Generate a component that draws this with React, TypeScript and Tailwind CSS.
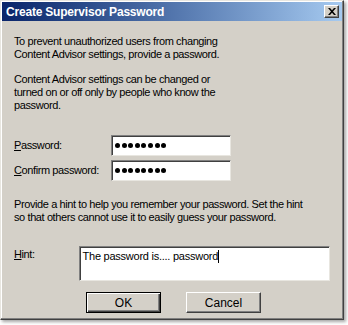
export default function App() {
  const dots = [0, 1, 2, 3, 4, 5, 6, 7];

  return (
    <div className="w-[348px] h-[325px] bg-white overflow-hidden font-['Liberation_Sans',Arial,sans-serif] text-black">
      {/* Dialog window */}
      <div className="w-[344px] h-[320px] bg-[#d4d0c8] border border-t-[#e8e6e0] border-l-[#e8e6e0] border-r-[#404040] border-b-[#404040] shadow-[inset_-1px_-1px_0_#808080,inset_1px_1px_0_#ffffff,2px_2px_3px_rgba(0,0,0,0.35)] p-[1px] flex flex-col">
        {/* Title bar */}
        <div className="h-[19px] bg-gradient-to-r from-[#0a246a] to-[#a6caf0] flex items-center justify-between pl-[4px] pr-[3px]">
          <span className="text-white font-bold text-[12px] tracking-[-0.2px] leading-none">
            Create Supervisor Password
          </span>
          <button className="w-[15px] h-[13px] bg-[#d4d0c8] border border-t-white border-l-white border-r-[#404040] border-b-[#404040] shadow-[inset_-1px_-1px_0_#808080] flex items-center justify-center">
            <svg width="8" height="7" viewBox="0 0 8 7">
              <path d="M0 0h2l2 2.2L6 0h2L5 3.5 8 7H6L4 4.8 2 7H0l3-3.5z" fill="#000" />
            </svg>
          </button>
        </div>

        {/* Body */}
        <div className="flex flex-col px-[12px] text-[11px] leading-[13px] tracking-[-0.4px]">
          <p className="mt-[14px]">
            To prevent unauthorized users from changing
            <br />
            Content Advisor settings, provide a password.
          </p>
          <p className="mt-[12px]">
            Content Advisor settings can be changed or
            <br />
            turned on or off only by people who know the
            <br />
            password.
          </p>

          {/* Password fields */}
          <div className="mt-[23px] flex items-center">
            <span className="w-[97px]">
              <span className="underline">P</span>assword:
            </span>
            <div className="w-[120px] h-[21px] bg-white border border-t-[#808080] border-l-[#808080] border-r-[#e8e6e0] border-b-[#e8e6e0] shadow-[inset_1px_1px_0_#404040] flex items-center gap-[1.6px] pl-[3px]">
              {dots.map((d) => (
                <span key={d} className="w-[5px] h-[5px] rounded-full bg-black" />
              ))}
            </div>
          </div>
          <div className="mt-[4px] flex items-center">
            <span className="w-[97px]">
              <span className="underline">C</span>onfirm password:
            </span>
            <div className="w-[120px] h-[21px] bg-white border border-t-[#808080] border-l-[#808080] border-r-[#e8e6e0] border-b-[#e8e6e0] shadow-[inset_1px_1px_0_#404040] flex items-center gap-[1.6px] pl-[3px]">
              {dots.map((d) => (
                <span key={d} className="w-[5px] h-[5px] rounded-full bg-black" />
              ))}
            </div>
          </div>

          <p className="mt-[17px]">
            Provide a hint to help you remember your password. Set the hint
            <br />
            so that others cannot use it to easily guess your password.
          </p>

          {/* Hint */}
          <div className="mt-[22px] flex items-start">
            <span className="w-[65px] mt-[2px]">
              <span className="underline">H</span>int:
            </span>
            <div className="w-[253px] h-[35px] bg-white border border-t-[#808080] border-l-[#808080] border-r-[#e8e6e0] border-b-[#e8e6e0] shadow-[inset_1px_1px_0_#404040] pl-[3px] pt-[3px] flex items-start tracking-[-0.25px]">
              <span>The password is.... password</span>
              <span className="w-px h-[13px] bg-black" />
            </div>
          </div>

          {/* Buttons */}
          <div className="mt-[11px] flex gap-[25px] pl-[72px] tracking-normal">
            <button className="w-[75px] h-[21px] bg-[#d4d0c8] border border-black shadow-[inset_1px_1px_0_#ffffff,inset_-1px_-1px_0_#404040,inset_-2px_-2px_0_#808080] text-[12px] leading-none">
              OK
            </button>
            <button className="w-[75px] h-[21px] bg-[#d4d0c8] border border-t-white border-l-white border-r-[#404040] border-b-[#404040] shadow-[inset_-1px_-1px_0_#808080] text-[12px] leading-none">
              Cancel
            </button>
          </div>
        </div>
      </div>
    </div>
  );
}
